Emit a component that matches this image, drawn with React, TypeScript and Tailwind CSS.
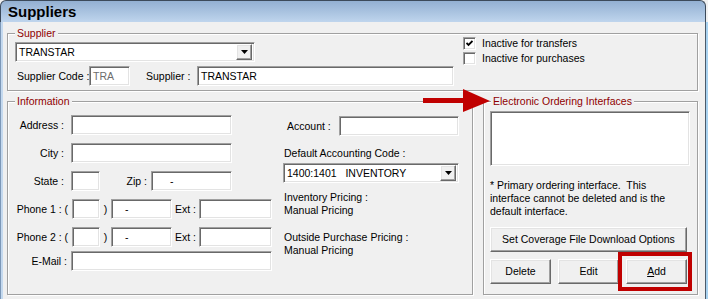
import React from "react";

const sunken =
  "bg-white border border-t-[#a0a0a0] border-l-[#a0a0a0] border-r-white border-b-white shadow-[inset_1px_1px_0_#696969,inset_-1px_-1px_0_#e3e3e3]";
const raised =
  "bg-[#f0f0f0] border border-t-white border-l-white border-r-[#696969] border-b-[#696969] shadow-[inset_-1px_-1px_0_#a0a0a0,inset_1px_1px_0_#e3e3e3]";
const etched = "border border-[#a0a0a0] shadow-[inset_1px_1px_0_#fff,1px_1px_0_#fff]";

function Field({ className = "", children }: { className?: string; children?: React.ReactNode }) {
  return <div className={`${sunken} h-[20px] flex items-center pl-[3px] ${className}`}>{children}</div>;
}

function Combo({ className = "", text }: { className?: string; text: string }) {
  return (
    <div className={`${sunken} h-[20px] flex items-center justify-between pl-[3px] pr-[2px] ${className}`}>
      <span className="whitespace-pre">{text}</span>
      <span className={`${raised} w-[16px] h-[16px] flex items-center justify-center`}>
        <svg width="7" height="4" viewBox="0 0 7 4">
          <path d="M0 0H7L3.5 4Z" fill="#000" />
        </svg>
      </span>
    </div>
  );
}

function Button({ className = "", children }: { className?: string; children: React.ReactNode }) {
  return <div className={`${raised} h-[25px] flex items-center justify-center ${className}`}>{children}</div>;
}

function Group({ legend, className = "", children }: { legend: string; className?: string; children?: React.ReactNode }) {
  return (
    <div className={`relative ${etched} ${className}`}>
      <span className="absolute left-[7px] top-[-7px] px-[2px] bg-[#f0f0f0] text-[#8f0000]">{legend}</span>
      {children}
    </div>
  );
}

function Check({ checked, label }: { checked?: boolean; label: string }) {
  return (
    <div className="flex items-center h-[13px]">
      <span className={`${sunken} w-[13px] h-[13px] flex items-center justify-center`}>
        {checked && (
          <svg width="7" height="7" viewBox="0 0 7 7">
            <path d="M0.5 3L2.5 5L6.5 1" stroke="#000" strokeWidth="1.8" fill="none" />
          </svg>
        )}
      </span>
      <span className="ml-[6px]">{label}</span>
    </div>
  );
}

export default function App() {
  return (
    <div className="relative w-[708px] h-[299px] overflow-hidden whitespace-nowrap bg-[#f0f0f0] font-['Liberation_Sans',Arial,sans-serif] text-[10.5px] leading-[13px] text-black">
      <div className="h-[22px] mr-[2px] rounded-t-[6px] border-t border-x border-[#3c4a5a] bg-gradient-to-b from-[#93b0d2] to-[#bfd5ed] flex items-center pl-[7px]">
        <span className="text-[15px] font-bold leading-none">Suppliers</span>
      </div>

      <div className="flex h-[277px]">
        <div className="w-[3px] border-l border-[#7d98b8] bg-[#c4d9ef]" />

        <div className="w-[702px]">
          {/* Supplier */}
          <Group legend="Supplier" className="ml-[4px] mt-[11px] w-[691px] h-[58px]">
            <div className="flex pt-[3px] pl-[7px]">
              <div className="w-[441px] pt-[5px]">
                <Combo className="w-[240px]" text="TRANSTAR" />
                <div className="flex items-center mt-[4px] h-[20px]">
                  <span className="w-[74px] pl-[2px]">Supplier Code :</span>
                  <Field className="w-[41px] text-[#6d6d6d]">TRA</Field>
                  <span className="w-[67px] pl-[16px]">Supplier :</span>
                  <Field className="w-[257px]">TRANSTAR</Field>
                </div>
              </div>
              <div className="ml-[7px] flex flex-col gap-[2px]">
                <Check checked label="Inactive for transfers" />
                <Check label="Inactive for purchases" />
              </div>
            </div>
          </Group>

          <div className="flex ml-[4px] mt-[10px]">
            {/* Information */}
            <Group legend="Information" className="w-[466px] h-[194px]">
              <div className="flex pt-[13px]">
                <div className="w-[275px] flex flex-col">
                  <div className="flex items-center h-[20px]">
                    <span className="w-[56px] text-right">Address :</span>
                    <Field className="ml-[7px] w-[161px]" />
                  </div>
                  <div className="flex items-center h-[20px] mt-[8px]">
                    <span className="w-[56px] text-right">City :</span>
                    <Field className="ml-[7px] w-[161px]" />
                  </div>
                  <div className="flex items-center h-[20px] mt-[8px]">
                    <span className="w-[56px] text-right">State :</span>
                    <Field className="ml-[7px] w-[29px]" />
                    <span className="w-[51px] text-right pr-[4px]">Zip :</span>
                    <Field className="w-[81px] pl-[18px]">-</Field>
                  </div>
                  {["Phone 1 : (", "Phone 2 : ("].map((label) => (
                    <div key={label} className="flex items-center h-[20px] mt-[8px]">
                      <span className="w-[60px] text-right">{label}</span>
                      <Field className="ml-[4px] w-[28px]" />
                      <span className="w-[11px] text-center">)</span>
                      <Field className="w-[61px] pl-[13px]">-</Field>
                      <span className="w-[27px] text-right pr-[3px]">Ext :</span>
                      <Field className="w-[73px]" />
                    </div>
                  ))}
                  <div className="flex items-center h-[20px] mt-[4px]">
                    <span className="w-[59px] text-right">E-Mail :</span>
                    <Field className="ml-[4px] w-[201px]" />
                  </div>
                </div>

                <div className="flex flex-col pt-[1px]">
                  <div className="flex items-center h-[20px]">
                    <span className="w-[56px] pl-[4px]">Account :</span>
                    <Field className="w-[120px]" />
                  </div>
                  <div className="mt-[11px] pl-[1px]">Default Accounting Code :</div>
                  <Combo className="mt-[3px] w-[176px] pl-[2px]" text="1400:1401   INVENTORY" />
                  <div className="mt-[8px] pl-[1px]">
                    <div>Inventory Pricing :</div>
                    <div>Manual Pricing</div>
                  </div>
                  <div className="mt-[14px] pl-[1px]">
                    <div>Outside Purchase Pricing :</div>
                    <div>Manual Pricing</div>
                  </div>
                </div>
              </div>
            </Group>

            {/* Electronic Ordering Interfaces */}
            <Group legend="Electronic Ordering Interfaces" className="ml-[10px] w-[215px] h-[194px]">
              <div className="flex flex-col pl-[6px] pt-[9px]">
                <div className={`${sunken} w-[200px] h-[55px]`} />
                <div className="mt-[13px] whitespace-pre">
                  <div>* Primary ordering interface.  This</div>
                  <div>interface cannot be deleted and is the</div>
                  <div>default interface.</div>
                </div>
                <Button className="mt-[9px] w-[197px]">Set Coverage File Download Options</Button>
                <div className="flex gap-[7px] mt-[7px]">
                  <Button className="w-[61px]">Delete</Button>
                  <Button className="w-[61px]">Edit</Button>
                  <div className="relative">
                    <Button className="w-[61px]">
                      <span>
                        <span className="underline">A</span>dd
                      </span>
                    </Button>
                    <span className="absolute left-[-8px] top-[-7px] w-[74px] h-[39px] border-[4px] border-[#c00000]" />
                  </div>
                </div>
              </div>
            </Group>
          </div>
        </div>

        <div className="w-[3px] border-l border-[#4a5a6a] bg-[#a8d2f0]" />
      </div>

      {/* callout arrow */}
      <svg className="absolute left-[420px] top-[86px]" width="72" height="28" viewBox="0 0 72 28">
        <rect x="3" y="12" width="42" height="5" fill="#c00000" />
        <path d="M43 3L70 15L43 26Z" fill="#c00000" />
      </svg>
    </div>
  );
}
